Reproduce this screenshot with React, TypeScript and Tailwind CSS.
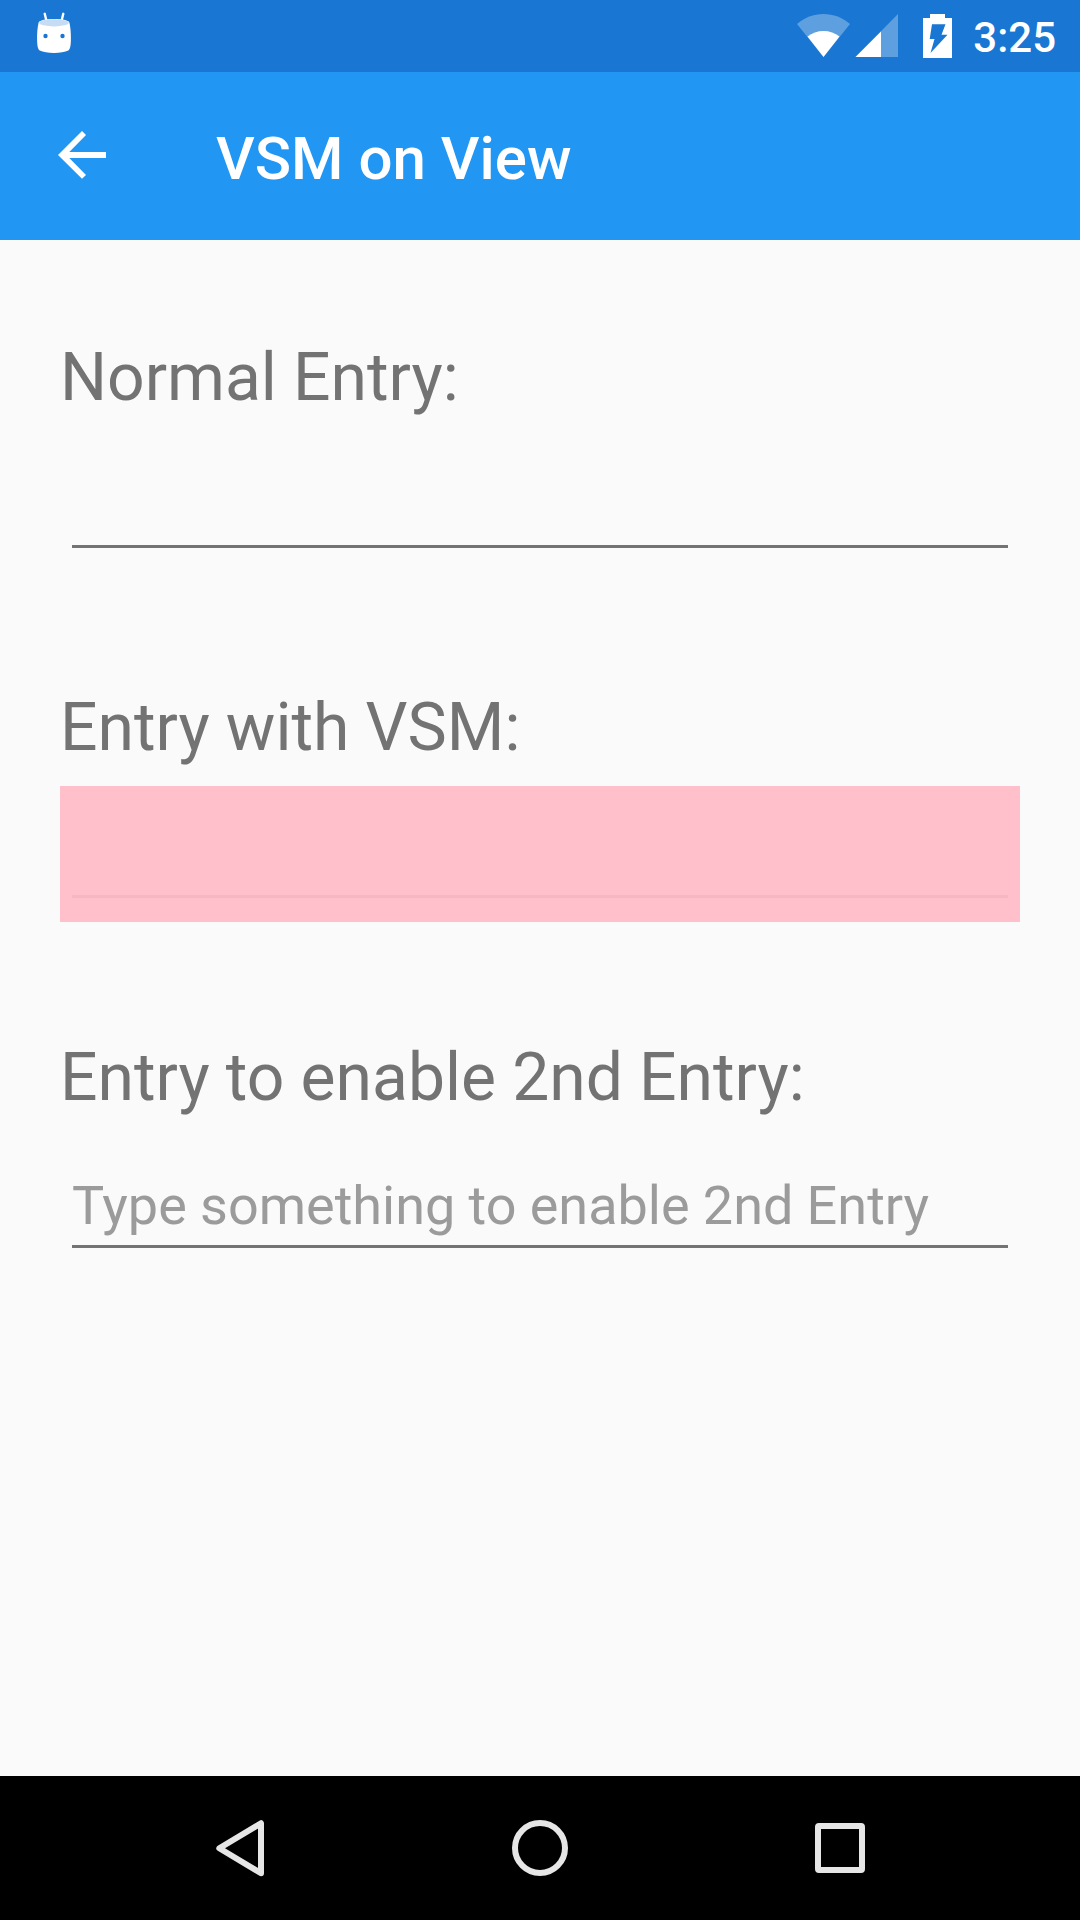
import React from "react";

function StatusBar() {
  return (
    <header className="flex h-[72px] items-center justify-between bg-[#1976d2] pr-[24px]">
      <svg className="h-[72px] w-[108px]" viewBox="0 0 108 72">
        <path d="M44.700 13.800L46.500 21M63.300 13.800L61.500 21" stroke="#fff" strokeWidth="2.400" strokeLinecap="round" />
        <path
          d="M38.500 23C38.500 20.500 45 19 54 19S69.500 20.500 69.500 23C70.600 28 71 33 70.900 40C70.800 46 70 49.500 68.300 50.600C65 52.300 60 53 54 53S43 52.300 39.700 50.600C38 49.500 37.200 46 37.100 40C37 33 37.400 28 38.500 23Z"
          fill="#fff"
        />
        <ellipse cx="54" cy="22.800" rx="14.800" ry="3.600" fill="#c6dbf4" />
        <circle cx="45.500" cy="36" r="2.200" fill="#1976d2" />
        <circle cx="62.500" cy="36" r="2.200" fill="#1976d2" />
      </svg>
      <div className="flex h-[72px] items-center">
        <svg className="h-[72px] w-[180px]" viewBox="793 0 180 72" fill="#fff">
          <path d="M823.500 57L797 24C804.500 17.500 813.500 14 823.500 14S842.500 17.500 850 24Z" fillOpacity="0.3" />
          <path d="M823.500 57L807.500 36.500C812 33 817.500 31 823.500 31S835 33 839.500 36.500Z" />
          <path d="M855.500 57L898 14V57Z" fillOpacity="0.3" />
          <path d="M855.500 57L881 31.500V57Z" />
          <path d="M930 14H945V18H952V58H923V18H930Z" />
          <path d="M932 24.300H945.500L941.500 34.700H947.500L930.500 53L934.500 39H929.700Z" fill="#1976d2" />
        </svg>
        <span className="h-[72px] pt-[2px] text-[42px] leading-[72px] font-medium text-white">3:25</span>
      </div>
    </header>
  );
}

function AppBar() {
  return (
    <div className="flex h-[168px] bg-[#2196f3]">
      <button type="button" aria-label="Back" className="h-[168px] w-[204px] shrink-0">
        <svg className="h-[168px] w-[204px]" viewBox="0 72 204 168" fill="#fff">
          <path d="M58 154.900L82 131L86 134.900L69.300 152H106V158H69.300L86 174.900L82 178.800Z" />
        </svg>
      </button>
      <h1 className="pt-[52px] pl-[12px] text-[60px] leading-[70px] font-medium whitespace-nowrap text-white">
        VSM on View
      </h1>
    </div>
  );
}

type FieldProps = { id: string; label: string; placeholder?: string; disabled?: boolean };

function Field({ id, label, placeholder, disabled }: FieldProps) {
  return (
    <div className="flex flex-col gap-[18px]">
      <label
        htmlFor={id}
        className="h-[88px] pt-[4px] text-[66px] leading-[88px] [word-spacing:-0.25px] whitespace-nowrap text-[#737373]"
      >
        {label}
      </label>
      <div className={disabled ? "h-[136px] bg-[#ffc0cb] px-[12px]" : "h-[136px] px-[12px]"}>
        <input
          id={id}
          placeholder={placeholder}
          disabled={disabled}
          className={
            disabled
              ? "block h-[112px] w-full border-b-[3px] border-[#f5b8c3] bg-transparent"
              : "block h-[112px] w-full border-b-[3px] border-[#737373] bg-transparent pt-[30px] text-[54px] [word-spacing:-0.2px] text-[#212121] outline-none placeholder:text-[#9b9b9b]"
          }
        />
      </div>
    </div>
  );
}

function NavigationBar() {
  return (
    <nav className="flex h-[144px] items-center justify-center bg-black">
      <button type="button" aria-label="Back" className="flex w-[300px] justify-center">
        <svg className="size-[72px]" viewBox="0 0 72 72" fill="none" stroke="#e6e6e6" strokeWidth="6" strokeLinejoin="round">
          <path d="M15.300 36.200L57 11.200V61.200Z" />
        </svg>
      </button>
      <button type="button" aria-label="Home" className="flex w-[300px] justify-center">
        <svg className="size-[72px]" viewBox="0 0 72 72" fill="none" stroke="#e6e6e6" strokeWidth="6">
          <circle cx="36" cy="36" r="25" />
        </svg>
      </button>
      <button type="button" aria-label="Recent apps" className="flex w-[300px] justify-center">
        <svg className="size-[72px]" viewBox="0 0 72 72">
          <path
            fillRule="evenodd"
            fill="#e6e6e6"
            d="M15 11H57Q61 11 61 15V57Q61 61 57 61H15Q11 61 11 57V15Q11 11 15 11ZM17 17V55H55V17Z"
          />
        </svg>
      </button>
    </nav>
  );
}

export default function App() {
  return (
    <div className="flex h-[1920px] w-[1080px] flex-col overflow-hidden bg-[#fafafa] font-[Roboto,sans-serif]">
      <StatusBar />
      <AppBar />
      <main className="flex flex-1 flex-col gap-[108px] px-[60px] pt-[90px]">
        <Field id="normal" label="Normal Entry:" />
        <Field id="vsm" label="Entry with VSM:" disabled />
        <Field id="enable" label="Entry to enable 2nd Entry:" placeholder="Type something to enable 2nd Entry" />
      </main>
      <NavigationBar />
    </div>
  );
}
